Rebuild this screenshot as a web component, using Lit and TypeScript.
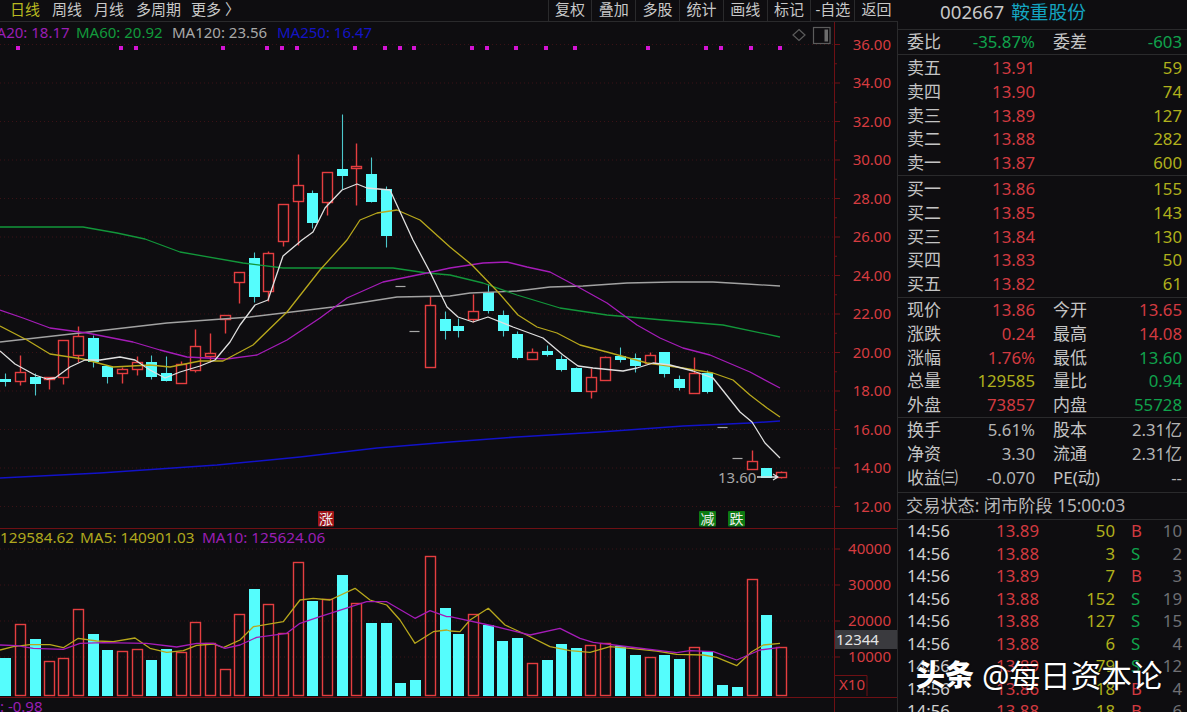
import { LitElement, html, svg, css } from "lit";
import { customElement } from "lit/decorators.js";

type Candle = [number, number, number, number, number, number];
// x, body top, body bottom, wick top, wick bottom, rising (1) or falling (0)
const CANDLES: Candle[] = [
  [5, 379, 381, 373, 386, 0], [20, 372, 381, 355, 385, 1], [35, 377, 383, 373, 395, 0],
  [49, 377, 379, 377, 389, 1], [63, 340, 377, 340, 384, 1], [78, 336, 355, 326, 362, 1],
  [93, 338, 361, 335, 367, 0], [107, 366, 376, 366, 383, 0], [122, 369, 373, 367, 383, 1],
  [137, 362, 369, 356, 375, 1], [151, 362, 376, 355, 379, 0], [166, 373, 380, 356, 381, 0],
  [181, 364, 383, 361, 383, 1], [195, 346, 370, 329, 372, 1], [210, 353, 356, 333, 362, 1],
  [225, 315, 319, 315, 333, 1], [239, 272, 282, 272, 303, 1], [254, 258, 296, 252, 302, 0],
  [268, 253, 291, 251, 301, 1], [283, 204, 241, 204, 246, 1], [298, 185, 201, 154, 245, 1],
  [312, 193, 222, 190, 228, 0], [327, 172, 202, 172, 215, 1], [342, 169, 175, 114, 189, 0],
  [356, 166, 168, 143, 205, 1], [371, 174, 201, 157, 202, 0], [386, 189, 235, 186, 247, 0],
  [430, 305, 367, 296, 367, 1], [445, 319, 330, 311, 339, 0], [458, 326, 330, 318, 337, 0],
  [473, 311, 319, 294, 322, 1], [488, 292, 310, 284, 313, 0], [503, 315, 330, 310, 336, 0],
  [517, 334, 357, 331, 359, 0], [532, 352, 359, 348, 359, 1], [547, 351, 354, 345, 356, 0],
  [561, 359, 369, 355, 371, 0], [576, 368, 391, 367, 391, 0], [591, 377, 391, 368, 398, 1],
  [605, 357, 380, 356, 380, 1], [620, 356, 359, 347, 362, 0], [635, 358, 365, 353, 372, 0],
  [650, 355, 363, 352, 363, 1], [664, 352, 373, 352, 377, 0], [679, 379, 387, 375, 390, 0],
  [694, 373, 393, 357, 393, 1], [707, 373, 391, 370, 393, 0], [752, 461, 469, 450, 469, 1],
  [766, 468, 477, 468, 477, 0], [781, 472, 477, 471, 478, 1],
];
const DASHES: [number, number][] = [[400, 286], [414, 331], [722, 427], [737, 458]];

const VOLUMES: [number, number, number][] = [
  [5, 658, 0], [20, 624, 1], [35, 639, 0], [49, 661, 1], [63, 658, 1], [78, 609, 1], [93, 634, 0],
  [107, 650, 0], [122, 651, 1], [137, 649, 1], [151, 660, 0], [166, 649, 0], [181, 652, 1],
  [195, 622, 1], [210, 643, 1], [225, 669, 1], [239, 614, 1], [254, 589, 0], [268, 604, 1],
  [283, 633, 1], [298, 562, 1], [312, 601, 0], [327, 599, 1], [342, 575, 0], [356, 603, 1],
  [371, 623, 0], [386, 623, 0], [400, 683, 0], [415, 680, 0], [430, 556, 1], [445, 608, 0],
  [458, 634, 0], [473, 614, 1], [488, 625, 0], [502, 641, 0], [517, 638, 0], [532, 663, 1],
  [547, 660, 0], [561, 644, 0], [576, 648, 0], [590, 645, 1], [605, 643, 1], [620, 646, 0],
  [635, 655, 0], [650, 657, 1], [664, 655, 0], [679, 659, 0], [694, 647, 1], [707, 651, 0],
  [722, 685, 0], [737, 687, 0], [752, 579, 1], [766, 615, 0], [781, 647, 1],
];

const LINE_WHITE = "0,351 15,364 35,375 47,379 55,378 70,367 85,360 100,360 120,357 135,360 150,370 165,378 180,372 200,366 215,360 230,342 240,325 255,305 268,300 283,256 302,240 313,232 325,208 342,190 357,184 367,188 390,190 413,240 430,272 447,307 458,317 473,322 488,317 513,327 543,338 563,355 578,366 593,368 623,371 637,368 653,363 670,365 693,371 713,378 740,412 752,422 765,443 780,458";
const LINE_YELLOW = "0,326 27,340 50,354 83,359 113,367 150,365 170,367 200,361 223,361 253,345 287,312 320,270 347,240 360,220 377,213 397,210 420,220 450,247 472,265 498,292 518,315 537,327 557,333 580,345 607,352 647,363 683,368 713,373 733,380 750,395 767,408 780,417";
const LINE_PURPLE = "0,310 23,318 50,328 87,333 133,342 160,350 187,357 227,359 257,355 287,340 320,318 347,298 383,282 427,273 450,268 483,263 507,262 527,267 550,272 580,288 607,303 637,325 660,338 683,348 710,355 750,372 780,388";
const LINE_GREEN = "0,227 83,227 117,233 145,239 180,252 243,263 283,268 393,268 427,273 450,275 483,283 517,295 560,308 607,315 663,320 723,325 780,337";
const LINE_GRAY = "0,342 80,333 167,323 250,317 333,307 397,297 450,296 470,293 517,291 550,287 583,286 627,283 673,282 713,282 747,284 780,286";
const LINE_BLUE = "0,478 100,473 217,465 300,457 377,448 450,442 517,437 600,432 683,426 750,423 780,421";

const z8 = (pts: number[][]) => pts.map(([x, y]) => `${(x / 3).toFixed(1)},${(500 + y / 3).toFixed(1)}`);
const z9 = (pts: number[][]) => pts.map(([x, y]) => `${(450 + x / 3).toFixed(1)},${(500 + y / 3).toFixed(1)}`);
const VOL_YELLOW = [
  ...z8([[0,450],[40,440],[90,434],[150,434],[190,443],[235,415],[290,423],[340,425],[405,414],[450,445],[500,457],[550,452],[590,436],[640,432],[670,443],[720,420],[760,380],[850,365],[900,300],[940,295],[990,300],[1065,265],[1110,300],[1160,315],[1200,360],[1245,430],[1300,395],[1340,390]]),
  ...z9([[0,393],[30,395],[60,360],[115,325],[165,375],[230,405],[300,440],[360,452],[420,457],[480,440],[540,445],[620,453],[680,463],[760,465],[800,472],[860,497],[905,455],[940,435],[990,430]]),
].join(" ");
const VOL_PURPLE = [
  ...z8([[0,435],[50,437],[100,445],[190,448],[240,430],[310,428],[440,430],[530,441],[590,430],[640,430],[675,445],[720,435],[770,412],[860,400],[900,370],[960,350],[1100,305],[1160,305],[1245,355],[1290,332],[1340,350]]),
  ...z9([[0,350],[130,378],[240,405],[330,385],[390,415],[430,427],[540,441],[680,458],[720,452],[790,455],[860,480],[930,450],[990,442]]),
].join(" ");

const PINK_DOTS = [18, 121, 136, 223, 267, 282, 297, 355, 385, 400, 414, 472, 487, 516, 546, 575, 648, 706, 721, 751, 780];
const PRICES = ["36.00", "34.00", "32.00", "30.00", "28.00", "26.00", "24.00", "22.00", "20.00", "18.00", "16.00", "14.00", "12.00"];
const VOL_AXIS: [string, number][] = [["40000", 549], ["30000", 585], ["20000", 621], ["10000", 657]];

const TOOLS = ["复权", "叠加", "多股", "统计", "画线", "标记", "-自选", "返回"];

const ASKS: [string, string, string][] = [["卖五", "13.91", "59"], ["卖四", "13.90", "74"], ["卖三", "13.89", "127"], ["卖二", "13.88", "282"], ["卖一", "13.87", "600"]];
const BIDS: [string, string, string][] = [["买一", "13.86", "155"], ["买二", "13.85", "143"], ["买三", "13.84", "130"], ["买四", "13.83", "50"], ["买五", "13.82", "61"]];
const QUOTE: { l1: string; v1: string; c1: string; l2: string; v2: string; c2: string }[] = [
  { l1: "现价", v1: "13.86", c1: "red", l2: "今开", v2: "13.65", c2: "red" },
  { l1: "涨跌", v1: "0.24", c1: "red", l2: "最高", v2: "14.08", c2: "red" },
  { l1: "涨幅", v1: "1.76%", c1: "red", l2: "最低", v2: "13.60", c2: "green" },
  { l1: "总量", v1: "129585", c1: "yellow", l2: "量比", v2: "0.94", c2: "green" },
  { l1: "外盘", v1: "73857", c1: "red", l2: "内盘", v2: "55728", c2: "green" },
];
const STATS: { l1: string; v1: string; l2: string; v2: string }[] = [
  { l1: "换手", v1: "5.61%", l2: "股本", v2: "2.31亿" },
  { l1: "净资", v1: "3.30", l2: "流通", v2: "2.31亿" },
  { l1: "收益㈢", v1: "-0.070", l2: "PE(动)", v2: "--" },
];
const TICKS: [string, string, string, string][] = [
  ["13.89", "50", "B", "10"], ["13.88", "3", "S", "2"], ["13.89", "7", "B", "3"],
  ["13.88", "152", "S", "19"], ["13.88", "127", "S", "15"], ["13.88", "6", "S", "4"],
  ["13.89", "79", "S", "12"], ["13.86", "18", "B", "4"], ["13.88", "18", "B", "6"],
];

@customElement("app-root")
export class AppRoot extends LitElement {
  static styles = css`
    :host {
      display: grid;
      grid-template-columns: 898px 289px;
      width: 1187px;
      height: 712px;
      overflow: hidden;
      background: #0e0d10;
      color: #c4c4c4;
      font-family: "Noto Sans", "Noto Sans CJK SC", sans-serif;
      position: relative;
    }
    .chartcol { display: flex; flex-direction: column; min-width: 0; height: 712px; }
    .toolbar {
      height: 22px;
      flex: none;
      box-sizing: border-box;
      display: flex;
      justify-content: space-between;
      border-bottom: 1px solid #2a2a2c;
      font-size: 15px;
      line-height: 18px;
      color: #c8c8c8;
    }
    .tabs { display: flex; gap: 12px; padding-left: 10px; white-space: nowrap; }
    .tabs .on { color: #b9b920; }
    .tabs .more { margin-left: -2px; }
    .tools { display: flex; }
    .tools span {
      width: 43.8px;
      box-sizing: border-box;
      text-align: center;
      border-left: 1px solid #2a2a2c;
      white-space: nowrap;
    }
    svg.chart { display: block; flex: none; width: 898px; height: 690px; }
    svg text { font-family: "Noto Sans", "Noto Sans CJK SC", sans-serif; }
    .t15 { font-size: 15px; }
    .vol { font-size: 15.3px; }
    .axis { font-size: 15px; fill: #d63c40; text-anchor: end; }
    .grid { stroke: #3a1216; stroke-width: 1; stroke-dasharray: 1 3; }
    .axisline { stroke: #6e1014; stroke-width: 1; fill: none; }
    .edge { stroke: #2a2a2c; stroke-width: 1; }
    .up { stroke: #e43e40; fill: none; stroke-width: 1.4; }
    .upfill { stroke: #e43e40; fill: #0e0d10; stroke-width: 1.4; }
    .down { stroke: #55fdfd; fill: #55fdfd; stroke-width: 1; }
    .wickdown { stroke: #4cc8cc; stroke-width: 1.1; }
    .dash { stroke: #a8a8a8; stroke-width: 1.2; }
    .ln { fill: none; stroke-width: 1.3; stroke-linejoin: round; }
    .lw { stroke: #e0e0e0; }
    .ly { stroke: #b8a81c; }
    .lp { stroke: #a51cb8; }
    .lg { stroke: #12963a; }
    .la { stroke: #a2a2a2; }
    .lb { stroke: #1212c8; stroke-width: 1.6; }
    .pink { fill: #d414d4; }
    .fpurple { fill: #9a1fb4; }
    .fgreen { fill: #129a3c; }
    .fgray { fill: #a8a8a8; }
    .fblue { fill: #1414c4; }
    .folive { fill: #b0a81e; }
    .fwhite { fill: #e4e4e4; }
    .tagred { fill: #a21519; }
    .taggreen { fill: #0c7a12; }
    .tagtext { font-size: 14px; fill: #f0f0f0; text-anchor: middle; }
    .badge { fill: #3a3a3e; }
    .icon { fill: none; stroke: #5c5c5c; stroke-width: 1.2; }
    .iconfill { fill: #6c6c6c; }
    .panel { min-width: 0; height: 712px; overflow: hidden; font-size: 16.8px; }
    .head {
      height: 30px;
      box-sizing: border-box;
      border-bottom: 1px solid #2a2a2c;
      padding-left: 42px;
      display: flex;
      gap: 7px;
      font-size: 18.7px;
      line-height: 24px;
      white-space: nowrap;
    }
    .head .name { color: #14a4c0; }
    .head .code { color: #c8c8c8; }
    .sec {
      box-sizing: border-box;
      border-bottom: 1px solid #2a2a2c;
    }
    .h25 { height: 25px; }
    .h121 { height: 121px; padding-top: 1px; }
    .h122 { height: 122px; padding-top: 1px; }
    .h120 { height: 120px; }
    .h75 { height: 75px; }
    .h27 { height: 27px; }
    .row {
      display: grid;
      grid-template-columns: 50px 78px 18px 50px 79px;
      padding: 0 5px 0 9px;
      height: 23.8px;
      line-height: 23.8px;
      white-space: nowrap;
    }
    .lab { font-size: 17px; color: #c4c4c4; }
    .val { text-align: right; }
    .red { color: #d23a40; }
    .green { color: #10a24c; }
    .yellow { color: #b0b01c; }
    .gray { color: #b4b4b4; }
    .status {
      padding-left: 8px;
      font-size: 17.2px;
      line-height: 26px;
      color: #b8b8b8;
      white-space: nowrap;
    }
    .tick {
      display: grid;
      grid-template-columns: 60px 72px 76px 16px 1fr;
      padding: 0 5px 0 9px;
      height: 22.5px;
      line-height: 22.5px;
      white-space: nowrap;
    }
    .tick .side { padding-left: 16px; box-sizing: content-box; }
    .tick .time { color: #d0d0d0; }
    .tick .cnt { text-align: right; color: #707074; }
    .mark {
      position: absolute;
      left: 916px;
      top: 655px;
      display: flex;
      align-items: center;
      gap: 8px;
      color: #fff;
      white-space: nowrap;
      line-height: 40px;
      text-shadow: 0 0 2px #000;
    }
    .mark b { font-size: 29px; font-weight: 900; }
    .mark span { font-size: 30.6px; }
  `;

  private chart() {
    const grid = PRICES.map((_, i) => 44.5 + i * 38.5);
    const volGrid = VOL_AXIS.map(v => v[1]);
    const minor = PRICES.slice(0, 12).map((_, i) => 44.5 + i * 38.5 + 19.25);
    return html`<svg class="chart" viewBox="0 22 898 690" xmlns="http://www.w3.org/2000/svg">
      ${grid.map(y => svg`<line class="grid" x1="0" x2="834" y1=${y} y2=${y}></line>`)}
      ${volGrid.map(y => svg`<line class="grid" x1="0" x2="834" y1=${y} y2=${y}></line>`)}
      <line class="axisline" x1="834.5" x2="834.5" y1="22" y2="712"></line>
      <line class="axisline" x1="0" x2="897" y1="528.5" y2="528.5"></line>
      <line class="axisline" x1="0" x2="897" y1="697.5" y2="697.5"></line>
      <line class="edge" x1="897.5" x2="897.5" y1="22" y2="712"></line>
      ${grid.map(y => svg`<line class="axisline" x1="834" x2="840" y1=${y} y2=${y}></line>`)}
      ${minor.map(y => svg`<line class="axisline" x1="834" x2="837" y1=${y} y2=${y}></line>`)}
      ${volGrid.map(y => svg`<line class="axisline" x1="834" x2="840" y1=${y} y2=${y}></line>`)}

      <text class="t15 fpurple" x="-17" y="38">MA20: 18.17</text>
      <text class="t15 fgreen" x="76" y="38">MA60: 20.92</text>
      <text class="t15 fgray" x="172" y="38">MA120: 23.56</text>
      <text class="t15 fblue" x="277" y="38">MA250: 16.47</text>
      ${PINK_DOTS.map(x => svg`<rect class="pink" x=${x - 2} y="46" width="4" height="4"></rect>`)}

      <path class="icon" d="M799 29.5 L805 35 L799 40.5 L793 35 Z"></path>
      <rect class="icon" x="813.5" y="27.5" width="16.5" height="16"></rect>
      <rect class="iconfill" x="824.5" y="29.5" width="3.5" height="12"></rect>

      ${PRICES.map((p, i) => svg`<text class="axis" x="891" y=${49.8 + i * 38.5}>${p}</text>`)}

      <g transform="translate(0.5 0.5)">
        ${CANDLES.map(([x, t, b, wt, wb, up]) => up
          ? svg`<line class="up" x1=${x} x2=${x} y1=${wt} y2=${wb}></line>
                <rect class="upfill" x=${x - 5} y=${t} width="10" height=${b - t}></rect>`
          : svg`<line class="wickdown" x1=${x} x2=${x} y1=${wt} y2=${wb}></line>
                <rect class="down" x=${x - 5} y=${t} width="10" height=${Math.max(b - t, 1)}></rect>`)}
        ${DASHES.map(([x, y]) => svg`<line class="dash" x1=${x - 5} x2=${x + 5} y1=${y} y2=${y}></line>`)}
      </g>

      <polyline class="ln lb" points=${LINE_BLUE}></polyline>
      <polyline class="ln la" points=${LINE_GRAY}></polyline>
      <polyline class="ln lg" points=${LINE_GREEN}></polyline>
      <polyline class="ln lp" points=${LINE_PURPLE}></polyline>
      <polyline class="ln ly" points=${LINE_YELLOW}></polyline>
      <polyline class="ln lw" points=${LINE_WHITE}></polyline>

      <text class="t15 fgray" x="718" y="483">13.60</text>
      <path class="ln lw" d="M757 477 H778 M773 474 L778 477 L773 480"></path>

      <rect class="tagred" x="318" y="511" width="16" height="15.5" rx="1"></rect>
      <text class="tagtext" x="326" y="524">涨</text>
      <rect class="taggreen" x="699" y="511" width="17" height="15.5" rx="1"></rect>
      <text class="tagtext" x="707.5" y="524">减</text>
      <rect class="taggreen" x="728" y="511" width="17" height="15.5" rx="1"></rect>
      <text class="tagtext" x="736.5" y="524">跌</text>

      <text class="vol folive" x="0" y="543">129584.62</text>
      <text class="vol folive" x="80" y="543">MA5: 140901.03</text>
      <text class="vol fpurple" x="202" y="543">MA10: 125624.06</text>

      <g transform="translate(0.5 0.5)">
        ${VOLUMES.map(([x, t, up]) => up
          ? svg`<rect class="up" x=${x - 5} y=${t} width="10" height=${695 - t}></rect>`
          : svg`<rect class="down" x=${x - 5} y=${t} width="10" height=${695 - t}></rect>`)}
      </g>
      <polyline class="ln ly" points=${VOL_YELLOW}></polyline>
      <polyline class="ln lp" points=${VOL_PURPLE}></polyline>

      ${VOL_AXIS.map(([v, y]) => svg`<text class="axis" x="891" y=${y + 5.3}>${v}</text>`)}
      <rect class="badge" x="835" y="630" width="62" height="19"></rect>
      <text class="t15 fwhite" x="836" y="645">12344</text>
      <path class="axisline" d="M835 675.5 H867 V696"></path>
      <text class="axis" x="865" y="690">X10</text>

      <text class="t15 fpurple" x="0" y="712">: -0.98</text>
    </svg>`;
  }

  render() {
    return html`
      <section class="chartcol">
        <nav class="toolbar">
          <div class="tabs">
            <span class="on">日线</span><span>周线</span><span>月线</span><span>多周期</span>
            <span class="more">更多 〉</span>
          </div>
          <div class="tools">${TOOLS.map(t => html`<span>${t}</span>`)}</div>
        </nav>
        ${this.chart()}
      </section>
      <aside class="panel">
        <div class="head"><span class="code">002667</span><span class="name">鞍重股份</span></div>
        <div class="sec h25">
          <div class="row">
            <span class="lab">委比</span><span class="val green">-35.87%</span><span></span>
            <span class="lab">委差</span><span class="val green">-603</span>
          </div>
        </div>
        <div class="sec h121">
          ${ASKS.map(([l, p, q]) => html`<div class="row">
            <span class="lab">${l}</span><span class="val red">${p}</span><span></span><span></span><span class="val yellow">${q}</span>
          </div>`)}
        </div>
        <div class="sec h122">
          ${BIDS.map(([l, p, q]) => html`<div class="row">
            <span class="lab">${l}</span><span class="val red">${p}</span><span></span><span></span><span class="val yellow">${q}</span>
          </div>`)}
        </div>
        <div class="sec h120">
          ${QUOTE.map(r => html`<div class="row">
            <span class="lab">${r.l1}</span><span class="val ${r.c1}">${r.v1}</span><span></span>
            <span class="lab">${r.l2}</span><span class="val ${r.c2}">${r.v2}</span>
          </div>`)}
        </div>
        <div class="sec h75">
          ${STATS.map(r => html`<div class="row">
            <span class="lab">${r.l1}</span><span class="val gray">${r.v1}</span><span></span>
            <span class="lab">${r.l2}</span><span class="val gray">${r.v2}</span>
          </div>`)}
        </div>
        <div class="sec h27 status">交易状态: 闭市阶段 15:00:03</div>
        <div>
          ${TICKS.map(([p, v, s, c]) => html`<div class="tick">
            <span class="time">14:56</span>
            <span class="val red">${p}</span>
            <span class="val yellow">${v}</span>
            <span class="side ${s === "B" ? "red" : "green"}">${s}</span>
            <span class="cnt">${c}</span>
          </div>`)}
        </div>
      </aside>
      <div class="mark"><b>头条</b><span>@每日资本论</span></div>
    `;
  }
}
